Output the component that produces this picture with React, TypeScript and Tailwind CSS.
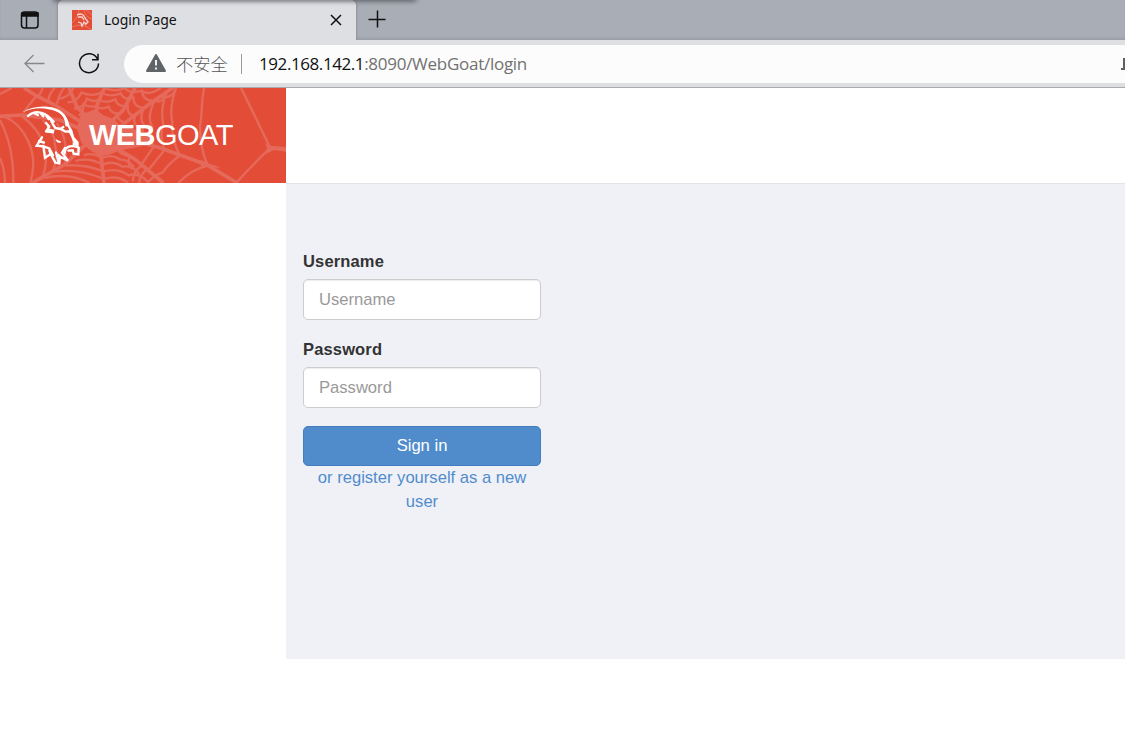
import React from "react";

function GoatHead({ className }: { className?: string }) {
  return (
    <svg viewBox="12 9 180 192" className={className} fill="#fff">
      <path d="M13 37C34 23 61 17 89 20C125 22 149 43 154 76L164 93L156 96L149 79C145 54 124 31 91 28C65 22 42 25 13 37Z" />
      <path d="M110 26C133 33 150 51 152 81L142 78C142 58 134 41 110 26Z" />
      <path d="M30 48C48 32 70 34 88 47L107 65M50 40L60 45M66 38L76 49M82 43L92 57M96 53L102 68" fill="none" stroke="#fff" strokeWidth="7" strokeLinecap="round" />
      <path d="M84 66L94 76L93 86L111 89L105 98L81 97L89 85Z" />
      <path d="M82 67L94 80L84 94L108 97M103 70L112 84L128 87L138 79M128 86L143 95L162 93" fill="none" stroke="#fff" strokeWidth="7" strokeLinejoin="round" />
      <path d="M145 93L163 92L169 112L182 126L182 146L174 143L174 132L165 126L160 112L154 100Z" />
      <path d="M112 117L130 125L126 129L117 127ZM164 127L179 130L174 137L164 136Z" />
      <g fill="none" stroke="#fff" strokeWidth="7" strokeLinejoin="miter" strokeLinecap="round">
        <path d="M72 112L56 137L76 139L81 173L98 162L112 188L124 190L126 170L150 182L132 158L141 144M63 123L78 128M76 139L94 145L105 166M98 162L94 151M114 157L122 186M126 170L120 164" />
        <path d="M140 160C139 141 157 133 182 143L181 163L167 161L164 151L151 152" />
      </g>
    </svg>
  );
}

function SpiderWeb() {
  return (
    <svg viewBox="0 6 858 285" preserveAspectRatio="none" className="absolute inset-0 h-full w-full" fill="none" stroke="#e66a5c">
      <path d="M242 86L286 70L310 88L342 100L358 116L382 124L440 140L456 174L400 186L364 192L326 206L300 210L266 190L244 170L230 126Z" fill="#e66a5c" stroke="none" />
      <g strokeWidth="11">
        <path d="M270 100L232 65L207 6M290 110L290 60L313 6M330 110L370 72L405 6M350 130L440 60L520 4M400 165L475 184L540 207L620 236L712 291M340 182L405 220L490 291M300 180L312 291M260 172L195 235L96 291M245 130L180 102L65 87L0 91M246 110L165 57L110 30L72 6" />
      </g>
      <g strokeWidth="7">
        <path d="M236 89Q252 76 250 56Q271 64 290 61Q301 72 326 62Q332 82 352 82Q349 101 372 109" />
        <path d="M222 68Q250 68 261 38Q280 50 298 41Q319 54 346 40Q352 65 383 59Q381 90 405 88Q396 114 420 132" />
        <path d="M202 49Q232 49 244 20Q277 33 304 20Q333 35 362 22Q372 45 400 35Q401 64 432 65Q416 98 431 115Q420 148 442 176" />
        <path d="M176 38Q208 34 220 6M312 6Q346 20 376 6Q386 25 426 14Q429 47 464 44Q439 92 457 124Q448 154 460 182" />
        <path d="M427 17Q452 28 482 6M464 43Q486 55 499 22Q480 69 490 116Q477 151 494 194" />
        <path d="M486 33Q517 38 528 6Q507 66 517 107Q513 158 539 207" />
        <path d="M275 196Q292 181 308 199Q330 182 354 191Q360 207 390 210Q379 229 396 249" />
        <path d="M251 208Q278 198 306 216Q334 203 361 221Q382 219 402 244" />
        <path d="M226 225Q268 213 308 236Q337 222 367 242Q400 236 418 266" />
        <path d="M197 239Q253 233 310 257Q350 244 386 268Q414 258 446 289" />
        <path d="M163 257Q238 247 311 279Q352 266 384 290M133 276Q206 259 269 291" />
        <path d="M460 184Q438 214 419 244Q401 254 398 286M493 193Q472 219 450 246Q421 258 417 291M542 207Q508 230 488 259Q459 269 443 291" />
      </g>
      <g strokeWidth="7">
        <path d="M613 6C603 38 608 80 600 119Q600 190 624 239Q574 250 535 291" />
        <path d="M723 6L766 93L809 182L858 191M811 184Q757 238 708 291" />
        <path d="M0 103Q41 179 40 291M16 93Q61 113 83 163Q112 218 91 291M62 87Q119 131 131 178Q147 227 125 280M128 102Q165 137 165 177Q176 218 156 258M170 111Q205 154 195 230M0 216Q15 252 15 291" />
        <path d="M128 6Q119 32 107 33Q90 53 70 80M164 6Q143 29 145 50M193 6Q179 19 171 53" />
        <path d="M0 24L35 6" />
      </g>
      <path d="M603 222L623 232L662 244L637 246L603 241ZM794 170L808 179L858 183V197L822 192L791 207L802 186Z" fill="#e66a5c" stroke="none" />
    </svg>
  );
}

function Tab() {
  return (
    <div className="relative flex h-10 w-[298px] items-center rounded-t-[5px] bg-[#dedfe3] shadow-[0_0_3px_#73777c]">
      <svg viewBox="0 0 20 20" className="ml-[14px] h-5 w-5 bg-[#e44d36]" fill="none" stroke="#f8dcd7" strokeWidth="1.300">
        <path d="M0 13Q6 8 7 0M12 0Q13 7 20 9M0 17Q9 12 20 20M14 0L20 5" stroke="#eb8173" strokeWidth=".8" />
        <path d="M5 5Q11 2 13 8L16 12L13 15M6 7L10 7L12 10M6 12L9 13L10 16L12 12L14 14" />
      </svg>
      <span className="ml-[12px] w-[220px] font-['Noto_Sans'] text-[14px] leading-5 tracking-[-0.05px] text-[#111]">Login Page</span>
      <svg viewBox="0 0 12 12" className="ml-[6px] h-3 w-3 shrink-0" fill="none" stroke="#111" strokeWidth="1.500">
        <path d="m1 1 10 10M11 1 1 11" />
      </svg>
    </div>
  );
}

function BrowserBar() {
  return (
    <header className="bg-[#dedfe3]">
      <div className="relative flex h-10 overflow-hidden bg-[#a9adb6] shadow-[inset_0_-2px_2px_#9b9fa6]">
        <div className="flex w-[58px] items-center rounded-br-[5px] pl-5">
          <svg viewBox="0 0 20 20" className="h-5 w-5" fill="none" stroke="#111" strokeWidth="1.500">
            <rect x="1.500" y="2" width="16.500" height="16" rx="3" />
            <path d="M2 3H18V6H2Z" fill="#111" />
            <path d="M6.500 6V18" />
          </svg>
        </div>
        <Tab />
        <svg viewBox="0 0 18 18" className="mt-[10px] ml-[12px] h-[18px] w-[18px]" fill="none" stroke="#111" strokeWidth="1.500">
          <path d="M9.500 .5V17.500M.5 9.500H17.500" />
        </svg>
        <div className="absolute -top-1 left-[53px] h-1 w-[363px] shadow-[0_1px_5px_#474a50]" />
      </div>
      <div className="flex h-12 items-center border-b border-[#a8a9ac]">
        <svg viewBox="0 0 22 20" className="ml-6 h-5 w-[22px]" fill="none" stroke="#85878b" strokeWidth="1.300">
          <path d="M9.500 1 1 9.500 9.500 18M1 9.500H20.500" />
        </svg>
        <svg viewBox="0 0 22 22" className="ml-8 h-[22px] w-[22px]" fill="none" stroke="#111" strokeWidth="1.500">
          <path d="M19.500 6A9.500 9.500 0 1 0 20.500 10.500M20 .8V6.800H14" />
        </svg>
        <div className="ml-[24px] flex h-[38px] flex-1 items-center overflow-hidden rounded-l-full bg-[#fcfcfc] pl-[22px]">
          <svg viewBox="0 0 20 19" className="h-[19px] w-5">
            <path d="M10 1 19 17H1Z" fill="#606367" stroke="#606367" strokeWidth="2" strokeLinejoin="round" />
            <path d="M10 6V11.500M10 13.500V15.500" stroke="#fff" strokeWidth="1.800" />
          </svg>
          <span className="ml-[10px] w-[52px] whitespace-nowrap font-['Noto_Sans_CJK_SC',sans-serif] text-[17.300px] font-light leading-6 text-[#555]">不安全</span>
          <span className="ml-[13px] h-5 w-px bg-[#999]" />
          <span className="ml-[17px] whitespace-nowrap font-['Open_Sans'] text-[17px] leading-6 tracking-[-0.27px] text-[#717171]"><span className="tracking-[-0.42px] text-[#111]">192.168.142.1</span>:8090/WebGoat/login</span>
          <svg viewBox="0 0 4 14" className="ml-auto h-[14px] w-1 shrink-0" fill="none" stroke="#606060" strokeWidth="2">
            <path d="M3 1V12H0" />
          </svg>
        </div>
      </div>
    </header>
  );
}

function Field({ label, type }: { label: string; type: string }) {
  return (
    <label className="block">
      <span className="block text-[16.500px] leading-6 font-bold tracking-[0.15px] text-[#333]">{label}</span>
      <input type={type} placeholder={label} className="mt-[6px] block h-[41px] w-full rounded-[5px] border border-[#ccc] bg-white px-[15px] text-[16.600px] leading-6 shadow-[inset_0_1px_1px_#00000012] placeholder:text-[#999]" />
    </label>
  );
}

export default function App() {
  return (
    <div className="h-[744px] w-full overflow-hidden bg-white font-['Liberation_Sans',sans-serif]">
      <BrowserBar />
      <div className="flex h-[95px]">
        <a className="relative flex w-[286px] overflow-hidden bg-[#e34d37]">
          <SpiderWeb />
          <GoatHead className="relative mt-[15px] ml-[22px] h-16 w-[60px]" />
          <span className="relative mt-[29px] ml-[7px] text-[29px] leading-9 tracking-[-0.55px] text-white"><b>WEB</b>GOAT</span>
        </a>
      </div>
      <main className="ml-[286px] h-[476px] border-t border-[#e2e3e8] bg-[#f0f1f7] pt-[65px] pl-[17px]">
        <form className="w-[238px]">
          <Field label="Username" type="text" />
          <div className="h-[17px]" />
          <Field label="Password" type="password" />
          <button type="button" className="mt-[18px] block h-10 w-full rounded-[5px] border border-[#437fbe] bg-[#508ccc] text-[16.600px] leading-6 text-white">Sign in</button>
          <a className="block text-center text-[16.600px] leading-6 text-[#508ccc]">or register yourself as a new user</a>
        </form>
      </main>
    </div>
  );
}
